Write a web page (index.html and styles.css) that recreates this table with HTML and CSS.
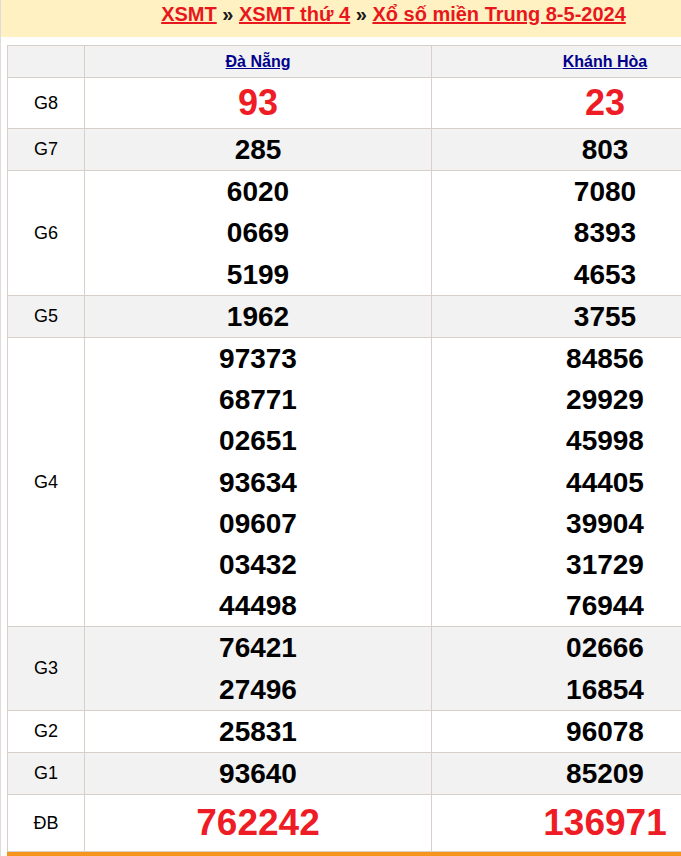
FILE: index.html
```html
<!DOCTYPE html>
<html lang="vi">
<head>
<meta charset="utf-8">
<title>XSMT thứ 4 - Xổ số miền Trung 8-5-2024</title>
<link rel="stylesheet" href="styles.css">
</head>
<body>
<div class="page">
  <div class="title-bar">
    <a class="crumb" href="#">XSMT</a> <span class="sep">»</span> <a class="crumb" href="#">XSMT thứ 4</a> <span class="sep">»</span> <a class="crumb" href="#">Xổ số miền Trung 8-5-2024</a>
  </div>
  <div class="content">
    <table class="results">
      <thead>
        <tr class="head">
          <th class="label"></th>
          <th><a class="prov" href="#">Đà Nẵng</a></th>
          <th><a class="prov" href="#">Khánh Hòa</a></th>
        </tr>
      </thead>
      <tbody>
        <tr class="g8">
          <td class="label">G8</td>
          <td><div class="num big">93</div></td>
          <td><div class="num big">23</div></td>
        </tr>
        <tr class="alt">
          <td class="label">G7</td>
          <td><div class="num">285</div></td>
          <td><div class="num">803</div></td>
        </tr>
        <tr>
          <td class="label">G6</td>
          <td><div class="num">6020</div><div class="num">0669</div><div class="num">5199</div></td>
          <td><div class="num">7080</div><div class="num">8393</div><div class="num">4653</div></td>
        </tr>
        <tr class="alt">
          <td class="label">G5</td>
          <td><div class="num">1962</div></td>
          <td><div class="num">3755</div></td>
        </tr>
        <tr>
          <td class="label">G4</td>
          <td><div class="num">97373</div><div class="num">68771</div><div class="num">02651</div><div class="num">93634</div><div class="num">09607</div><div class="num">03432</div><div class="num">44498</div></td>
          <td><div class="num">84856</div><div class="num">29929</div><div class="num">45998</div><div class="num">44405</div><div class="num">39904</div><div class="num">31729</div><div class="num">76944</div></td>
        </tr>
        <tr class="alt">
          <td class="label">G3</td>
          <td><div class="num">76421</div><div class="num">27496</div></td>
          <td><div class="num">02666</div><div class="num">16854</div></td>
        </tr>
        <tr>
          <td class="label">G2</td>
          <td><div class="num">25831</div></td>
          <td><div class="num">96078</div></td>
        </tr>
        <tr class="alt">
          <td class="label">G1</td>
          <td><div class="num">93640</div></td>
          <td><div class="num">85209</div></td>
        </tr>
        <tr class="db">
          <td class="label">ĐB</td>
          <td><div class="num special">762242</div></td>
          <td><div class="num special">136971</div></td>
        </tr>
      </tbody>
    </table>
    <div class="bottom-bar"></div>
  </div>
</div>
</body>
</html>
```

FILE: styles.css
```css
html, body {
  margin: 0;
  padding: 0;
  overflow: hidden;
  background: #ffffff;
}

body {
  font-family: "Liberation Sans", Arial, sans-serif;
  color: #000;
}

.page {
  width: 785px;
  border-left: 1px solid #dcdcdc;
  min-height: 900px;
}

.title-bar {
  height: 37px;
  box-sizing: border-box;
  padding-top: 1px;
  background: #fff1c1;
  text-align: center;
  font-size: 20px;
  font-weight: bold;
  line-height: 26px;
}

.crumb {
  color: #e8171d;
  text-decoration: underline;
}

.sep {
  color: #1a1a1a;
}

.content {
  padding: 8px 6px 0 6px;
}

.results {
  width: 772px;
  border-collapse: collapse;
  table-layout: fixed;
  border: 1px solid #d8d0c8;
}

.results th,
.results td {
  border: 1px solid #d8d0c8;
  padding: 0;
  text-align: center;
  vertical-align: middle;
}

.results th.label,
.results td.label {
  width: 76px;
}

.head {
  background: #f2f2f2;
  height: 32px;
}

.head th {
  font-weight: bold;
}

.prov {
  color: #00008b;
  font-size: 16px;
  text-decoration: underline;
}

.alt {
  background: #f2f2f2;
}

.label {
  font-size: 18px;
  font-weight: normal;
}

.num {
  font-size: 28px;
  font-weight: bold;
  line-height: 41.2px;
}

.num.big {
  font-size: 36px;
  line-height: 50px;
  color: #ee1c24;
}

.num.special {
  font-size: 37px;
  line-height: 56px;
  color: #ee1c24;
}

.bottom-bar {
  height: 5px;
  width: 772px;
  background: #f7941d;
}
```
